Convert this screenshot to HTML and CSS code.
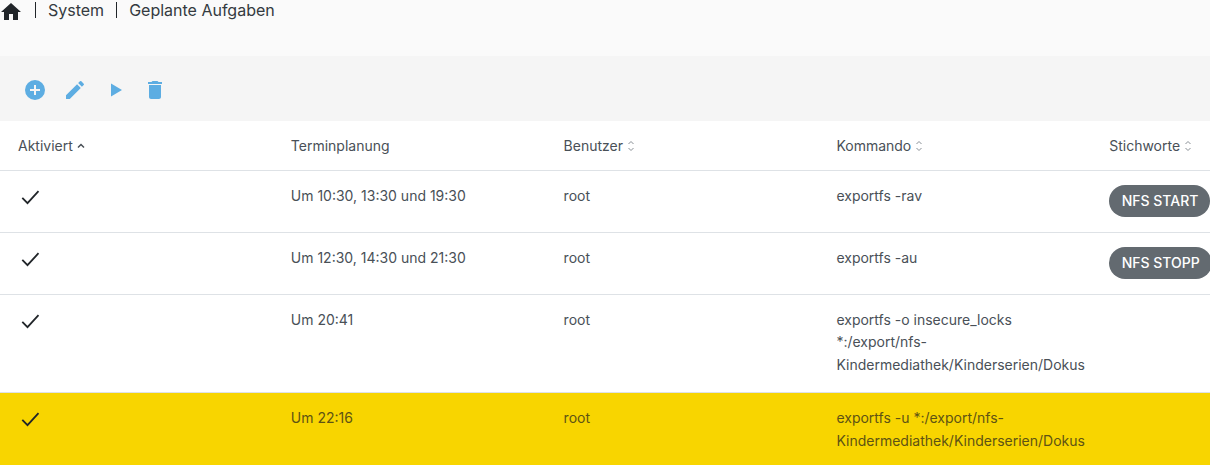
FILE: index.html
```html
<!DOCTYPE html>
<html lang="de">
<head>
  <meta charset="UTF-8">
  <title>Geplante Aufgaben</title>
  <link rel="stylesheet" href="styles.css">
</head>
<body>

<div class="crumbs">
  <svg class="home" viewBox="0 0 24 24"><path d="M10 20v-6h4v6h5v-8h3L12 3 2 12h3v8z"/></svg>
  <span class="crumb">System</span>
  <span class="crumb">Geplante Aufgaben</span>
</div>

<div class="toolbar">
  <svg class="tool" viewBox="0 0 24 24"><path d="M12 2a10 10 0 1 0 0 20 10 10 0 0 0 0-20zm5 11h-4v4h-2v-4H7v-2h4V7h2v4h4z"/></svg>
  <svg class="tool" viewBox="0 0 24 24"><path d="M3 17.25V21h3.75L17.81 9.94l-3.75-3.75L3 17.25zM20.71 7.04a1 1 0 0 0 0-1.41l-2.34-2.34a1 1 0 0 0-1.41 0l-1.83 1.83 3.75 3.75 1.83-1.83z"/></svg>
  <svg class="tool" viewBox="0 0 24 24"><path d="M8 5.500v13l11-6.500z"/></svg>
  <svg class="tool" viewBox="0 0 24 24"><path d="M6 19c0 1.1.9 2 2 2h8c1.1 0 2-.9 2-2V7H6v12zM19 4h-3.500l-1-1h-5l-1 1H5v2h14V4z"/></svg>
</div>

<div class="table-wrap">
<table class="jobs">
  <thead>
    <tr>
      <th>Aktiviert <svg class="sort" viewBox="0 0 10 14"><path d="M2 8.500l3-3 3 3"/></svg></th>
      <th>Terminplanung</th>
      <th>Benutzer <svg class="sort light" viewBox="0 0 10 14"><path d="M2.500 5l2.500-2.500L7.500 5M2.500 9l2.500 2.500L7.500 9"/></svg></th>
      <th>Kommando <svg class="sort light" viewBox="0 0 10 14"><path d="M2.500 5l2.500-2.500L7.500 5M2.500 9l2.500 2.500L7.500 9"/></svg></th>
      <th>Stichworte <svg class="sort light" viewBox="0 0 10 14"><path d="M2.500 5l2.500-2.500L7.500 5M2.500 9l2.500 2.500L7.500 9"/></svg></th>
    </tr>
  </thead>
  <tbody>
    <tr>
      <td><svg class="check" viewBox="0 0 24 24"><path d="M4.300 12.900l5.200 5.300 11-12"/></svg></td>
      <td>Um 10:30, 13:30 und 19:30</td>
      <td>root</td>
      <td>exportfs -rav</td>
      <td><span class="tag">NFS START</span></td>
    </tr>
    <tr>
      <td><svg class="check" viewBox="0 0 24 24"><path d="M4.300 12.900l5.200 5.300 11-12"/></svg></td>
      <td>Um 12:30, 14:30 und 21:30</td>
      <td>root</td>
      <td>exportfs -au</td>
      <td><span class="tag">NFS STOPP</span></td>
    </tr>
    <tr>
      <td><svg class="check" viewBox="0 0 24 24"><path d="M4.300 12.900l5.200 5.300 11-12"/></svg></td>
      <td>Um 20:41</td>
      <td>root</td>
      <td>exportfs -o insecure_locks *:/export/nfs-Kindermediathek/Kinderserien/Dokus</td>
      <td></td>
    </tr>
    <tr class="active">
      <td><svg class="check" viewBox="0 0 24 24"><path d="M4.300 12.900l5.200 5.300 11-12"/></svg></td>
      <td>Um 22:16</td>
      <td>root</td>
      <td>exportfs -u *:/export/nfs-Kindermediathek/Kinderserien/Dokus</td>
      <td></td>
    </tr>
  </tbody>
</table>
</div>

</body>
</html>
```

FILE: styles.css
```css
html, body {
  margin: 0;
  height: 465px;
  overflow: hidden;
  background: #fff;
  font-family: Inter, "Liberation Sans", sans-serif;
  color: #495057;
}

.crumbs {
  display: flex;
  align-items: flex-start;
  height: 56px;
  box-sizing: border-box;
  background: #fafafa;
  color: #343a40;
  font-size: 16px;
  line-height: 16px;
}
.home {
  width: 24px;
  height: 24px;
  margin-left: -1px;
  fill: #212529;
}
.crumb {
  margin: 2px 0 0 12px;
  padding-left: 12px;
  border-left: 1px solid #212529;
}

.toolbar {
  display: flex;
  align-items: center;
  gap: 16px;
  height: 65px;
  box-sizing: border-box;
  padding: 3px 0 0 23px;
  background: #f5f5f5;
}
.tool {
  width: 24px;
  height: 24px;
  fill: #5dade2;
}

.table-wrap {
  overflow: hidden;
}
.jobs {
  width: 1364px;
  table-layout: fixed;
  border-collapse: collapse;
  font-size: 14px;
  line-height: 22.500px;
}
.jobs th {
  height: 49px;
  padding: 2px 18px 0;
  box-sizing: border-box;
  font-weight: 400;
  text-align: left;
  border-bottom: 1px solid #dee2e6;
}
.jobs td {
  padding: 14px 18px 16px;
  vertical-align: top;
  border-bottom: 1px solid #dee2e6;
}
.active td {
  background: #f8d500;
  color: #5e5314;
  border-bottom: 0;
}

.sort {
  width: 10px;
  height: 14px;
  margin-left: -1px;
  vertical-align: -2px;
  fill: none;
  stroke: #495057;
  stroke-width: 1.500;
}
.sort.light {
  stroke: #8a9096;
  stroke-width: 1;
}

.check {
  display: block;
  width: 24px;
  height: 24px;
  margin-bottom: -2px;
  fill: none;
  stroke: #212529;
  stroke-width: 1.800;
}

.tag {
  display: block;
  width: fit-content;
  margin-bottom: -1px;
  padding: 0 12px 0 12.500px;
  border-radius: 16px;
  background: #636a70;
  color: #fff;
  font-size: 14px;
  font-weight: 500;
  line-height: 32px;
  white-space: nowrap;
}
```
